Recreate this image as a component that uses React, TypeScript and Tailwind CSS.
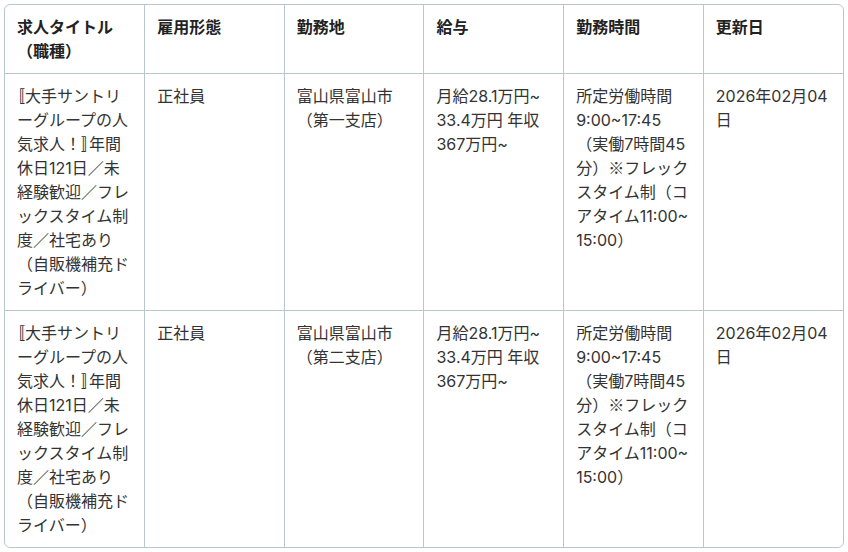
type Job = {
  title: React.ReactNode;
  type: string;
  place: string;
  salary: React.ReactNode;
  hours: React.ReactNode;
  updated: string;
};

const cjk = { fontFamily: '"Noto Sans CJK JP", sans-serif' };

// 括弧だけプロポーショナル幅にする
const Bracket = ({ children }: { children: string }) => (
  <span className="leading-none" style={{ ...cjk, fontFeatureSettings: '"palt"' }}>
    {children}
  </span>
);

const title = (
  <>
    <Bracket>〚</Bracket>大手サントリーグループの人気求人！<Bracket>〛</Bracket>
    年間休日121日／未経験歓迎／フレックスタイム制度／社宅あり（自販機補充ドライバー）
  </>
);

const salary = (
  <>
    月給28.1万円~
    <wbr />
    33.4万円 年収367万円~
  </>
);

const hours = (
  <>
    所定労働時間 9:00~17:45（実働7時間45分）
    <span className="leading-none" style={cjk}>
      ※
    </span>
    フレックスタイム制（コアタイム11:00~
    <wbr />
    15:00）
  </>
);

const jobs: Job[] = [
  {
    title,
    type: '正社員',
    place: '富山県富山市（第一支店）',
    salary,
    hours,
    updated: '2026年02月04日',
  },
  {
    title,
    type: '正社員',
    place: '富山県富山市（第二支店）',
    salary,
    hours,
    updated: '2026年02月04日',
  },
];

const headers = ['求人タイトル（職種）', '雇用形態', '勤務地', '給与', '勤務時間', '更新日'];

export default function App() {
  return (
    <div
      className="bg-white p-1 text-[#333]"
      style={{ fontFamily: 'Inter, "Noto Sans CJK JP", sans-serif' }}
    >
      <div className="overflow-hidden rounded-md border border-[#b9c6d2]">
        <table className="w-full table-fixed border-collapse text-[16px] leading-6">
          <thead>
            <tr>
              {headers.map((h, i) => (
                <th
                  key={h}
                  className={`px-3 py-2.5 text-left align-top font-bold text-[#222] ${
                    i > 0 ? 'border-l border-[#b9c6d2]' : ''
                  }`}
                >
                  {h}
                </th>
              ))}
            </tr>
          </thead>
          <tbody>
            {jobs.map((job, index) => (
              <tr key={'row' + index} className="border-t border-[#b9c6d2]">
                <td className="px-3 py-2.5 align-top">{job.title}</td>
                <td className="border-l border-[#b9c6d2] px-3 py-2.5 align-top">{job.type}</td>
                <td className="border-l border-[#b9c6d2] px-3 py-2.5 align-top">{job.place}</td>
                <td className="border-l border-[#b9c6d2] px-3 py-2.5 align-top">{job.salary}</td>
                <td className="border-l border-[#b9c6d2] px-3 py-2.5 align-top">{job.hours}</td>
                <td className="border-l border-[#b9c6d2] px-3 py-2.5 align-top">{job.updated}</td>
              </tr>
            ))}
          </tbody>
        </table>
      </div>
    </div>
  );
}
